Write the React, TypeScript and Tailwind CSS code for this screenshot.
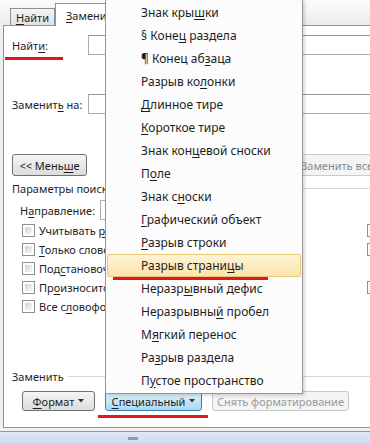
import React from "react";

const items: [string, string, string][] = [
  ["Знак кры", "ш", "ки"],
  ["§ Коне", "ц", " раздела"],
  ["¶ Конец аб", "з", "аца"],
  ["Разрыв ко", "л", "онки"],
  ["", "Д", "линное тире"],
  ["", "К", "ороткое тире"],
  ["Знак кон", "ц", "евой сноски"],
  ["П", "о", "ле"],
  ["Знак с", "н", "оски"],
  ["", "Г", "рафический объект"],
  ["", "Р", "азрыв строки"],
  ["Разрыв страни", "ц", "ы"],
  ["Неразр", "ы", "вный дефис"],
  ["Неразрывны", "й", " пробел"],
  ["М", "я", "гкий перенос"],
  ["Ра", "з", "рыв раздела"],
  ["П", "у", "стое пространство"],
];

function Key({ a, k, b }: { a: string; k: string; b: string }) {
  return (
    <span className="whitespace-nowrap">
      {a}
      <span className="underline underline-offset-2">{k}</span>
      {b}
    </span>
  );
}

function Check({ children }: { children?: React.ReactNode }) {
  return (
    <div className="h-[19px] flex items-center gap-[4px] whitespace-nowrap">
      <div className="w-[13px] h-[13px] border border-[#8e8f8f] bg-white p-[2px] shrink-0">
        <div className="w-full h-full bg-linear-to-br from-[#cfd2d6] to-[#f7f7f7]" />
      </div>
      {children}
    </div>
  );
}

function Arrow() {
  return (
    <svg width="6" height="4" viewBox="0 0 6 4" className="ml-[4px] shrink-0">
      <path d="M0 0h6L3 3.5z" fill="#333" />
    </svg>
  );
}

export default function App() {
  return (
    <div className="relative w-[370px] h-[443px] overflow-hidden bg-[#f0f0f0] text-[11px] text-[#1e1e1e] font-['Noto_Sans',sans-serif] leading-none">
      {/* tabs */}
      <div className="h-[25px] flex items-end pl-[10px] bg-linear-to-b from-[#fbfbfb] to-[#ececec]">
        <div className="w-[45px] h-[17px] border border-b-0 border-[#8e9296] bg-linear-to-b from-[#f4f4f4] to-[#e1e1e1] flex items-center justify-center">
          <Key a="" k="Н" b="айти" />
        </div>
        <div className="w-[80px] h-[23px] border border-b-0 border-[#8e9296] bg-white pl-[10px] pt-[6px] mb-[-1px] relative z-10">
          <Key a="" k="З" b="аменить" />
        </div>
      </div>

      {/* panel */}
      <div className="ml-[3px] w-[420px] h-[403px] border border-[#8e9296] bg-white flex flex-col pl-[8px] pt-[9px]">
        <div className="flex items-center h-[20px]">
          <div className="w-[76px] shrink-0">
            <Key a="Найт" k="и" b=":" />
          </div>
          <div className="w-[300px] h-[20px] border border-[#abadb3] border-t-[#999]" />
        </div>
        <div className="flex items-center h-[20px] mt-[39px]">
          <div className="w-[76px] shrink-0">
            <Key a="Заменит" k="ь" b=" на:" />
          </div>
          <div className="w-[300px] h-[20px] border border-[#abadb3] border-t-[#999]" />
        </div>

        <div className="flex items-center h-[22px] mt-[40px]">
          <div className="w-[75px] h-[22px] shrink-0 rounded-[3px] border border-[#707070] bg-linear-to-b from-[#f6f6f6] to-[#dcdcdc] flex items-center justify-center">
            <Key a="<< Мень" k="ш" b="е" />
          </div>
          <div className="ml-[205px] w-[90px] h-[22px] shrink-0 whitespace-nowrap rounded-[3px] border border-[#cbcbcb] bg-[#f4f4f4] text-[#8a8a8a] flex items-center justify-center">
            Заменить все
          </div>
        </div>

        <div className="flex items-center h-[16px] mt-[4px]">
          <span className="whitespace-nowrap">Параметры поиска</span>
          <div className="flex-1 h-px bg-[#d5d9dd] ml-[4px]" />
        </div>

        <div className="flex items-center h-[20px] mt-[4px] pl-[8px]">
          <div className="w-[80px] shrink-0">
            <Key a="Н" k="а" b="правление:" />
          </div>
          <div className="w-[70px] h-[20px] border border-[#abadb3] bg-white" />
        </div>

        <div className="flex mt-[1px] pl-[10px]">
          <div className="w-[345px] shrink-0 flex flex-col">
            <Check>
              <Key a="Учитывать " k="р" b="егистр" />
            </Check>
            <Check>
              <Key a="" k="Т" b="олько слово целиком" />
            </Check>
            <Check>
              <Key a="Под" k="с" b="тановочные знаки" />
            </Check>
            <Check>
              <Key a="Пр" k="о" b="износится как" />
            </Check>
            <Check>
              <Key a="Все с" k="л" b="овоформы" />
            </Check>
          </div>
          <div className="flex flex-col">
            <Check />
            <Check />
            <div className="h-[19px]" />
            <Check />
          </div>
        </div>

        <div className="flex items-center h-[16px] mt-[52px]">
          <span className="whitespace-nowrap">Заменить</span>
          <div className="flex-1 h-px bg-[#d5d9dd] ml-[4px]" />
        </div>

        <div className="flex items-center h-[20px] mt-[7px] pl-[10px] gap-[10px]">
          <div className="w-[73px] h-[20px] shrink-0 rounded-[3px] border border-[#707070] bg-linear-to-b from-[#f6f6f6] to-[#dcdcdc] flex items-center justify-center">
            <Key a="" k="Ф" b="ормат" />
            <Arrow />
          </div>
          <div className="w-[97px] h-[20px] shrink-0 rounded-[3px] border border-[#3c7fb1] bg-linear-to-b from-[#e5f4fc] to-[#a9d8f1] flex items-center justify-center">
            <Key a="" k="С" b="пециальный" />
            <Arrow />
          </div>
          <div className="w-[137px] h-[20px] shrink-0 whitespace-nowrap rounded-[3px] border border-[#c6c9cc] bg-[#f4f4f4] text-[#9a9a9a] flex items-center justify-center">
            Снять форматирование
          </div>
        </div>
      </div>

      {/* taskbar strip */}
      <div className="mt-[3px] h-[13px] border-t border-[#7f98bb] bg-linear-to-b from-[#dfe9f6] to-[#c9daf0] flex items-center pl-[128px]">
        <div className="w-[10px] h-[3px] bg-[#8a9bb3]" />
      </div>

      {/* dropdown menu */}
      <div className="absolute left-[105px] top-[-1px] w-[198px] border border-[#979797] bg-[#fcfcfc] p-px text-[12px] shadow-[2px_2px_3px_rgba(0,0,0,0.15)] z-20">
        {items.map(([a, k, b], i) => (
          <div
            key={i}
            className={
              i === 11
                ? "h-[23px] flex items-center pl-[33px] rounded-[2px] border border-[#e8c872] bg-linear-to-b from-[#fef3d4] to-[#fce4ae]"
                : "h-[23px] flex items-center pl-[34px]"
            }
          >
            <Key a={a} k={k} b={b} />
          </div>
        ))}
      </div>

      {/* red annotation marks */}
      <div className="absolute left-[5px] top-[57px] w-[58px] h-[3px] bg-[#e3161b] z-30" />
      <div className="absolute left-[113px] top-[277px] w-[155px] h-[3px] bg-[#e3161b] z-30" />
      <div className="absolute left-[98px] top-[415px] w-[110px] h-[3px] bg-[#e3161b] z-30" />
    </div>
  );
}
